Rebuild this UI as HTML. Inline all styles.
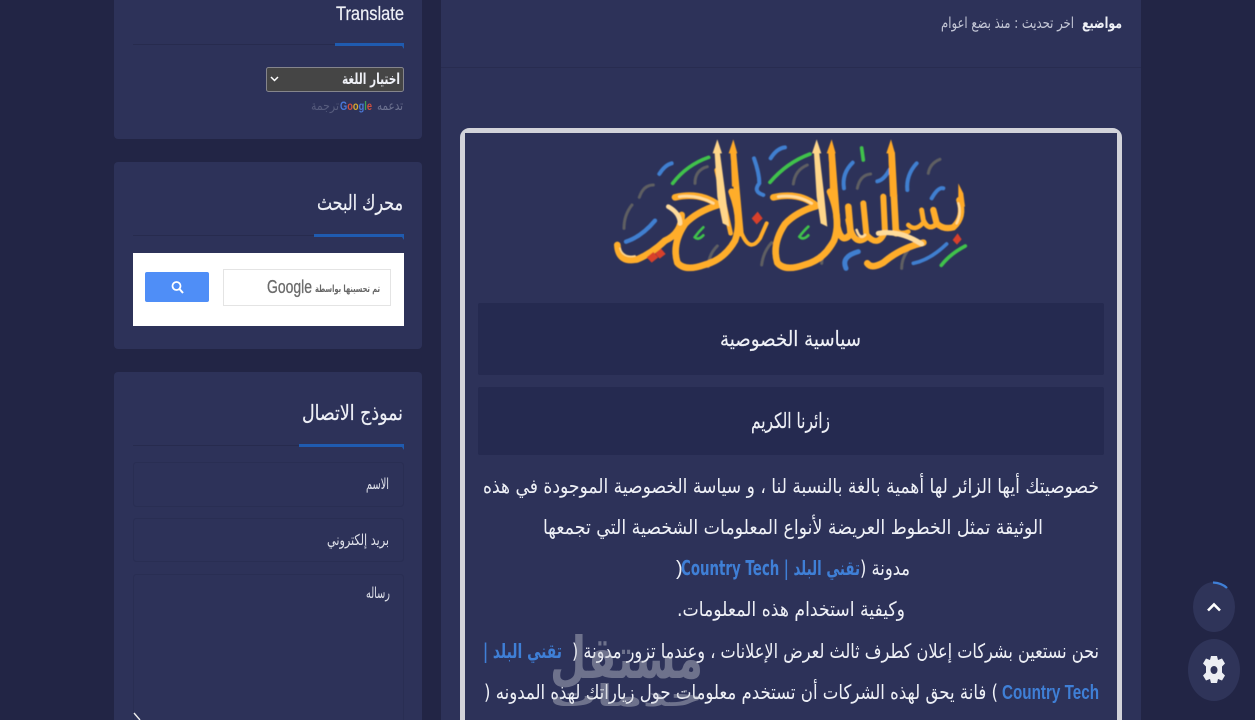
<!DOCTYPE html>
<html lang="ar"><head><meta charset="utf-8"><title>سياسة الخصوصية</title>
<style>
html,body{margin:0;padding:0;width:1255px;height:720px;overflow:hidden;background:#222545}
svg{display:block}
text{font-family:"DejaVu Sans","Liberation Sans",sans-serif;fill:#eef0f6}
.l{font-family:"Liberation Sans","DejaVu Sans",sans-serif}
</style></head><body>
<svg width="1255" height="720" viewBox="0 0 1255 720" xmlns="http://www.w3.org/2000/svg">
<defs><filter id="b" x="-5%" y="-5%" width="110%" height="110%"><feGaussianBlur stdDeviation="1.200"/></filter></defs>
<rect width="1255" height="720" fill="#222545"/>
<!-- sidebar cards -->
<rect x="114" y="-10" width="308" height="149" rx="4" fill="#2d3259"/>
<rect x="114" y="162" width="308" height="187" rx="4" fill="#2d3259"/>
<rect x="114" y="372" width="308" height="360" rx="4" fill="#2d3259"/>
<!-- main card -->
<rect x="441" y="-10" width="700" height="740" fill="#2d3259"/>
<rect x="441" y="67" width="700" height="1" fill="#282c50"/>

<!-- Translate -->
<text class="l" x="336" y="20" font-size="19" textLength="68" lengthAdjust="spacingAndGlyphs" direction="ltr" stroke="#eef0f6" stroke-width=".2">Translate</text>
<rect x="133" y="44" width="202" height="1" fill="#272b4e"/>
<path d="M335 43H404V49L402 46H335Z" fill="#1f5bb0"/>
<rect x="266.500" y="67.500" width="137" height="24" rx="2" fill="#454545" stroke="#85858c"/>
<path d="M271 77l3.500 3.500L278 77" fill="none" stroke="#fff" stroke-width="1.500"/>
<text x="400" y="84" font-size="15" font-weight="bold" direction="rtl" textLength="58" lengthAdjust="spacingAndGlyphs">اختيار اللغة</text>
<text x="403" y="110" font-size="13" direction="rtl" textLength="26" lengthAdjust="spacingAndGlyphs" style="fill:#6d7290">تدعمه</text>
<text x="339" y="110" font-size="13" direction="rtl" textLength="28" lengthAdjust="spacingAndGlyphs" style="fill:#565b7c">ترجمة</text>
<text class="l" x="340" y="110" font-size="12" font-weight="bold" direction="ltr" textLength="32" lengthAdjust="spacingAndGlyphs"><tspan style="fill:#4a78d8">G</tspan><tspan style="fill:#d0503e">o</tspan><tspan style="fill:#d8a92e">o</tspan><tspan style="fill:#4a78d8">g</tspan><tspan style="fill:#3f9f55">l</tspan><tspan style="fill:#d0503e">e</tspan></text>

<!-- search -->
<text x="403" y="210" font-size="21" direction="rtl" textLength="86" lengthAdjust="spacingAndGlyphs" stroke="#eef0f6" stroke-width=".2">محرك البحث</text>
<rect x="133" y="235" width="181" height="1" fill="#272b4e"/>
<path d="M314 234H404V240L402 237H314Z" fill="#1f5bb0"/>
<rect x="133" y="253" width="271" height="73" fill="#fff"/>
<rect x="223.500" y="269.500" width="167" height="36" fill="#fff" stroke="#e4e4e4"/>
<text class="l" x="267" y="293" font-size="18" direction="ltr" textLength="45" lengthAdjust="spacingAndGlyphs" stroke="#6b6b6b" stroke-width=".3" style="fill:#6b6b6b">Google</text>
<text x="380" y="292" font-size="10" font-weight="bold" direction="rtl" textLength="65" lengthAdjust="spacingAndGlyphs" style="fill:#666">تم تحسينها بواسطة</text>
<rect x="145" y="272" width="64" height="30" rx="2" fill="#4f8ef7"/>
<circle cx="176.500" cy="286" r="4" fill="none" stroke="#fff" stroke-width="1.800"/>
<path d="M179.500 289l3.500 4" stroke="#fff" stroke-width="2" fill="none"/>

<!-- contact -->
<text x="403" y="420" font-size="21" direction="rtl" textLength="101" lengthAdjust="spacingAndGlyphs" stroke="#eef0f6" stroke-width=".2">نموذج الاتصال</text>
<rect x="133" y="445" width="166" height="1" fill="#272b4e"/>
<path d="M299 444H404V450L402 447H299Z" fill="#1f5bb0"/>
<rect x="133.500" y="462.500" width="270" height="44" rx="3" fill="#2d3259" stroke="#292e53"/>
<rect x="133.500" y="518.500" width="270" height="43" rx="3" fill="#2d3259" stroke="#292e53"/>
<rect x="133.500" y="574.500" width="270" height="170" rx="3" fill="#2d3259" stroke="#292e53"/>
<text x="389" y="489" font-size="15" direction="rtl" textLength="23" lengthAdjust="spacingAndGlyphs" style="fill:#dfe1ea">الاسم</text>
<text x="389" y="545" font-size="15" direction="rtl" textLength="62" lengthAdjust="spacingAndGlyphs" style="fill:#dfe1ea">بريد إلكتروني</text>
<text x="390" y="598" font-size="15" direction="rtl" textLength="24" lengthAdjust="spacingAndGlyphs" style="fill:#dfe1ea">رساله</text>
<path d="M134 713l6 7" stroke="#eee" stroke-width="1.400" fill="none"/>

<!-- header -->
<text x="1122" y="28" font-size="15" font-weight="bold" direction="rtl" textLength="40" lengthAdjust="spacingAndGlyphs">مواضيع</text>
<text x="1074" y="28" font-size="15" direction="rtl" textLength="133" lengthAdjust="spacingAndGlyphs" style="fill:#c4c7d6">اخر تحديث : منذ بضع اعوام</text>

<!-- content box -->
<rect x="462.500" y="130.500" width="657" height="620" rx="7" fill="#2a2f58" stroke="#d2d3da" stroke-width="5"/>
<rect x="465" y="133" width="652" height="600" fill="#2d3259"/>

<!-- calligraphy illustration -->
<g transform="translate(600 120) scale(.3333)" fill="none" stroke-linecap="round" stroke-linejoin="round" filter="url(#b)">
 <g stroke="#5e5e62" stroke-width="9">
  <path d="M118 232Q130 195 160 195"/><path d="M285 190Q285 150 322 140"/>
  <path d="M580 192Q585 150 622 135"/><path d="M772 205Q780 165 812 162"/>
  <path d="M985 160Q990 130 1020 118"/><path d="M72 325Q72 285 96 255"/>
  <path d="M325 440Q325 405 352 378"/><path d="M485 435Q490 395 515 368"/>
  <path d="M665 430Q668 395 692 368"/><path d="M905 445Q905 410 932 382"/>
 </g>
 <g stroke="#3f7fd0" stroke-width="12">
  <path d="M178 162Q195 135 215 130"/><path d="M512 115Q530 85 555 82"/>
  <path d="M732 205Q725 160 758 128"/><path d="M832 184Q852 180 868 150"/>
  <path d="M922 210Q918 165 950 130"/><path d="M995 235Q1015 200 1030 205"/>
  <path d="M462 115Q478 160 478 190Q458 215 490 225"/>
  <path d="M78 365Q125 350 165 302" stroke-width="13"/><path d="M940 430Q990 420 1040 372" stroke-width="11"/>
  <path d="M738 445Q722 410 775 395" stroke-width="15"/>
 </g>
 <g stroke="#ffad2c" stroke-width="20">
  <!-- left word -->
  <path d="M52 375Q55 430 112 418Q155 400 195 362"/>
  <path d="M195 362Q245 340 245 285"/>
  <path d="M225 232Q300 215 355 255Q290 275 255 312Q215 372 232 428Q255 455 312 435Q372 420 405 362Q428 300 395 215"/>
  <path d="M350 150L392 340" stroke-width="14"/>
  <path d="M400 100L422 340" stroke-width="18"/>
  <!-- middle word -->
  <path d="M520 232Q600 215 650 258Q590 275 555 312Q515 372 532 428Q555 455 612 435Q672 420 702 362Q725 300 690 215"/>
  <path d="M425 340Q450 400 480 355L500 310" stroke-width="12"/>
  <path d="M695 100L712 320Q725 375 752 342L745 260" stroke-width="20"/>
  <!-- lillah -->
  <path d="M745 300Q760 385 800 352L790 250" stroke-width="18"/>
  <path d="M800 345Q835 385 855 335L850 230" stroke-width="18"/>
  <path d="M875 100L888 340" stroke-width="20"/>
  <path d="M970 368Q900 385 850 428Q815 448 802 430" stroke-width="20"/>
  <!-- bism -->
  <path d="M1078 240Q1095 290 1060 322Q1030 330 1010 310L1000 270" stroke-width="19"/>
  <path d="M1010 312Q985 335 970 300L965 270" stroke-width="15"/>
  <path d="M968 310Q945 335 925 315" stroke-width="14"/>
  <path d="M890 330Q900 345 925 335" stroke-width="14"/>
 </g>
 <g fill="#ffa928" stroke="none">
  <path d="M400 58L412 100H406L416 200L396 200L392 100H386Z"/>
  <path d="M695 58L707 100H701L712 210L690 210L686 100H680Z"/>
  <path d="M873 58L885 100H879L892 230L870 230L865 100H859Z"/>
  <path d="M1075 190L1090 220L1095 260L1075 262Z"/>
 </g>
 <g fill="#ffd68a" stroke="none">
  <path d="M352 58L366 100H360L376 220L388 320L368 310L352 230L344 100H338Z"/>
  <path d="M650 58L664 100H658L672 220L682 320L662 310L650 230L642 100H636Z"/>
 </g>
 <g stroke="#ffdc9c">
  <path d="M238 230Q290 222 340 250" stroke-width="8"/>
  <path d="M535 230Q590 222 635 250" stroke-width="8"/>
  <path d="M205 260Q240 280 240 310" stroke-width="14"/>
  <path d="M835 340Q900 330 965 372" stroke-width="15"/>
  <path d="M770 330Q780 360 795 345" stroke-width="8"/>
  <path d="M1075 250Q1085 280 1070 310" stroke-width="7"/>
  <path d="M60 385Q70 415 105 408" stroke-width="5" stroke="#ffd68a"/>
 </g>
 <g stroke="#3fc24c" stroke-width="11">
  <path d="M218 190Q260 135 326 112"/>
  <path d="M510 187Q560 128 630 102"/>
  <path d="M785 84L790 120"/>
  <path d="M1024 436Q1050 402 1096 378"/>
  <path d="M284 352Q296 335 310 322M284 352Q295 362 310 346" stroke-width="8"/>
  <path d="M598 350Q612 332 625 320M598 350Q610 362 625 346" stroke-width="8"/>
 </g>
 <g fill="#d8402c" stroke="none">
  <path d="M455 295l18-20 15 20-18 18z"/><path d="M140 412l20-16 15 16-20 16z"/>
  <path d="M165 400l18-14 14 16-18 14z"/><path d="M1058 360l15-20 12 18-14 16z"/>
 </g>
</g>

<!-- title panels -->
<rect x="478" y="303" width="626" height="72" rx="2" fill="#252a50"/>
<rect x="478" y="387" width="626" height="68" rx="2" fill="#252a50"/>
<text x="861" y="346" font-size="21" direction="rtl" textLength="141" lengthAdjust="spacingAndGlyphs" stroke="#eef0f6" stroke-width=".15">سياسية الخصوصية</text>
<text x="830" y="428" font-size="21" direction="rtl" textLength="79" lengthAdjust="spacingAndGlyphs" stroke="#eef0f6" stroke-width=".15">زائرنا الكريم</text>

<!-- paragraph -->
<g font-size="20">
<text x="1099" y="493" direction="rtl" textLength="616" lengthAdjust="spacingAndGlyphs">خصوصيتك أيها الزائر لها أهمية بالغة بالنسبة لنا ، و سياسة الخصوصية الموجودة في هذه</text>
<text x="1043" y="534" direction="rtl" textLength="500" lengthAdjust="spacingAndGlyphs">الوثيقة تمثل الخطوط العريضة لأنواع المعلومات الشخصية التي تجمعها</text>
<text x="910" y="575" direction="rtl" textLength="50" lengthAdjust="spacingAndGlyphs">مدونة (</text>
<text x="860" y="575" direction="rtl" font-weight="bold" textLength="179" lengthAdjust="spacingAndGlyphs" style="fill:#3f7fd6">تقني البلد | Country Tech</text>
<text class="l" x="676" y="575" direction="ltr">)</text>
<text x="905" y="616" direction="rtl" textLength="228" lengthAdjust="spacingAndGlyphs">وكيفية استخدام هذه المعلومات.</text>
<text x="1099" y="658" direction="rtl" textLength="527" lengthAdjust="spacingAndGlyphs">نحن نستعين بشركات إعلان كطرف ثالث لعرض الإعلانات ، وعندما تزور مدونة (</text>
<text x="562" y="658" direction="rtl" font-weight="bold" textLength="79" lengthAdjust="spacingAndGlyphs" style="fill:#3f7fd6">تقني البلد |</text>
<text class="l" x="1002" y="699" direction="ltr" font-weight="bold" textLength="97" lengthAdjust="spacingAndGlyphs" style="fill:#3f7fd6">Country Tech</text>
<text x="998" y="699" direction="rtl" textLength="514" lengthAdjust="spacingAndGlyphs">) فانة يحق لهذه الشركات أن تستخدم معلومات حول زياراتك لهذه المدونه (</text>
</g>

<!-- watermark -->
<g opacity=".42">
<text x="703" y="678" font-size="58" font-weight="bold" direction="rtl" textLength="153" lengthAdjust="spacingAndGlyphs" style="fill:#c9cbd4">مستقل</text>
<text x="703" y="706" font-size="30" font-weight="bold" direction="rtl" textLength="153" lengthAdjust="spacingAndGlyphs" style="fill:#c9cbd4">خدمات</text>
</g>

<!-- floating buttons -->
<ellipse cx="1214" cy="607" rx="21" ry="25" fill="#2f3459"/>
<path d="M1213 582.500Q1222 583 1227 588" fill="none" stroke="#3f7fd6" stroke-width="2.200"/>
<path d="M1208 610.500l6-6 6 6" fill="none" stroke="#fff" stroke-width="2.600"/>
<ellipse cx="1214" cy="670" rx="26" ry="31" fill="#2f3459"/>
<path d="M1211 656h6l1 4 4-1.500 3 5-3 3v6l3 3-3 5-4-1.500-1 4h-6l-1-4-4 1.500-3-5 3-3v-6l-3-3 3-5 4 1.500z" fill="#eceef3"/>
<ellipse cx="1214" cy="670" rx="3.500" ry="4" fill="#2f3459"/>
</svg>
</body></html>
